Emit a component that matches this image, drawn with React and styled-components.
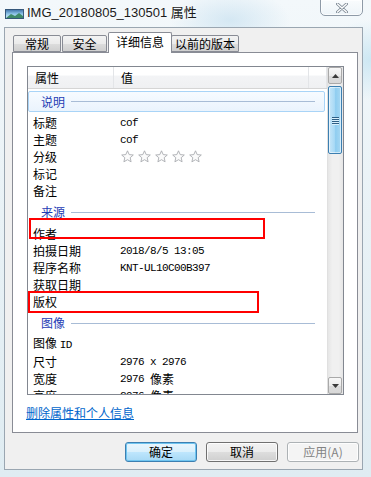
import React from 'react';
import styled, { createGlobalStyle } from 'styled-components';

const Global = createGlobalStyle`
  html, body { margin: 0; padding: 0; }
  body {
    width: 371px; height: 477px; overflow: hidden;
    font-family: "Noto Sans CJK SC", "Liberation Sans", sans-serif;
    font-size: 12px; color: #000;
  }
`;

const Window = styled.div`
  width: 371px; height: 477px; box-sizing: border-box;
  display: flex; flex-direction: column;
  padding: 0 8px 7px 4px;
  background:
    radial-gradient(ellipse 60px 30px at 230px 20px, rgba(200,225,240,0.7), transparent),
    radial-gradient(ellipse 50px 40px at 371px 60px, rgba(190,225,240,0.7), transparent),
    linear-gradient(180deg, #f3f8fb 0%, #e9f2f6 45%, #dfecf2 100%);
`;

const TitleBar = styled.div`
  height: 27px; flex: none;
  display: flex; align-items: flex-start;
`;

const AppIcon = styled.svg`
  margin: 9px 0 0 1px; flex: none;
`;

const Title = styled.div`
  margin: 4px 0 0 3px;
  font-family: "Liberation Sans", "Noto Sans CJK SC", sans-serif;
  font-size: 13px; line-height: 17px; color: #1a1a1a;
  text-shadow: 0 0 6px rgba(255,255,255,0.9);
`;

const CloseButton = styled.div`
  margin: -1px 0 0 auto;
  width: 43px; height: 17px; box-sizing: border-box;
  border: 1px solid #8e9aa7; border-radius: 0 0 5px 5px;
  background: linear-gradient(180deg, rgba(255,255,255,0.5), rgba(235,242,247,0.6));
  box-shadow: inset 0 0 0 1px rgba(255,255,255,0.7);
  display: flex; align-items: center; justify-content: center;
`;

const Client = styled.div`
  flex: 1; box-sizing: border-box;
  border: 1px solid #9aa6b1;
  background: #f0f0f0;
  padding: 5px 4px 0 7px;
  display: flex; flex-direction: column;
`;

const TabStrip = styled.div`
  height: 20px; display: flex; align-items: flex-end;
  margin-bottom: -1px; position: relative; z-index: 1;
  padding-left: 1px;
`;

const Tab = styled.div`
  box-sizing: border-box;
  height: ${p => (p.$active ? '21px' : '17px')};
  width: ${p => p.$w}px;
  margin: 0 ${p => (p.$active ? '-2px' : '0')};
  margin-bottom: ${p => (p.$active ? '0' : '1px')};
  border: 1px solid #898c95;
  border-bottom: ${p => (p.$active ? 'none' : '1px solid #898c95')};
  border-radius: 2px 2px 0 0;
  background: ${p => (p.$active ? '#fff' : 'linear-gradient(180deg, #f3f3f3 0%, #ebebeb 50%, #dddddd 51%, #cfcfcf 100%)')};
  position: relative; z-index: ${p => (p.$active ? 2 : 1)};
  display: flex; justify-content: center; align-items: center;
  padding-bottom: ${p => (p.$active ? '3px' : '0')};
  font-size: 12px; line-height: 14px; white-space: nowrap;
  & + & { margin-left: ${p => (p.$active ? '-2px' : '1px')}; }
`;

const TabPage = styled.div`
  box-sizing: border-box;
  height: 381px;
  border: 1px solid #898c95;
  background: #fff;
  padding: 13px 13px 0 14px;
  display: flex; flex-direction: column;
`;

const ListView = styled.div`
  box-sizing: border-box;
  height: 329px; flex: none;
  border: 1px solid #828790;
  display: flex;
  background: #fff;
`;

const ListBody = styled.div`
  flex: 1; min-width: 0; display: flex; flex-direction: column;
  overflow: hidden;
`;

const Header = styled.div`
  height: 22px; flex: none; box-sizing: border-box;
  display: flex;
  border-bottom: 1px solid #d5d5d5;
  background: linear-gradient(180deg, #ffffff 0%, #ffffff 40%, #f3f4f6 41%, #eff0f2 100%);
`;

const HeaderCell = styled.div`
  box-sizing: border-box;
  width: ${p => p.$w ? `${p.$w}px` : 'auto'};
  flex: ${p => p.$w ? 'none' : '1'};
  padding-left: 7px;
  border-right: 1px solid #e3e5e8;
  display: flex; align-items: center;
  font-size: 12px; line-height: 14px;
`;

const Rows = styled.div`
  flex: 1; position: relative;
`;

const GroupRow = styled.div`
  height: 25px; box-sizing: border-box;
  padding: 2px 2px 2px 0;
`;

const GroupBox = styled.div`
  height: 21px; box-sizing: border-box;
  display: flex; align-items: center; gap: 6px;
  padding: 0 9px 0 12px;
  border: 1px solid ${p => (p.$selected ? '#a9d4f7' : 'transparent')};
  border-radius: 2px;
  background: ${p => (p.$selected ? 'linear-gradient(180deg, #f7fbff 0%, #eaf3fd 100%)' : 'transparent')};
`;

const GroupLabel = styled.span`
  color: #1e3cb4; font-size: 12px; line-height: 14px;
  white-space: nowrap;
`;

const GroupLine = styled.div`
  flex: 1; height: 1px; background: #a8bcd6;
`;

const Row = styled.div`
  height: 17.2px; display: flex; align-items: center;
  position: relative;
`;

const NameCell = styled.div`
  width: 92px; flex: none; box-sizing: border-box; padding-left: 5px;
  font-size: 12px; line-height: 14px; white-space: nowrap;
`;

const ValueCell = styled.div`
  flex: 1; display: flex; align-items: center;
  font-size: 12px; line-height: 14px; white-space: nowrap;
`;

const Mono = styled.span`
  font-family: "Liberation Mono", monospace;
  font-size: 11px; letter-spacing: -0.6px;
  margin-right: ${p => p.$mr || 0}px;
`;

const Stars = styled.div`
  display: flex; gap: 4px; margin-left: 1px;
`;

const Mark = styled.div`
  position: absolute; box-sizing: border-box;
  left: ${p => p.$l}px; top: ${p => p.$t}px;
  width: ${p => p.$w}px; height: ${p => p.$h}px;
  border: 2px solid #ff0000;
  pointer-events: none;
`;

const ScrollBar = styled.div`
  width: 16px; flex: none; box-sizing: border-box;
  display: flex; flex-direction: column;
  background: linear-gradient(90deg, #e6e6e6 0%, #f0f0f0 30%, #f0f0f0 70%, #e6e6e6 100%);
  border-left: 1px solid #e0e0e0;
`;

const ArrowBtn = styled.div`
  height: 17px; flex: none; box-sizing: border-box;
  margin: 0 1px 0 0;
  border: 1px solid #a9a9a9; border-radius: 2px;
  background: linear-gradient(180deg, #f7f7f7 0%, #ececec 50%, #dcdcdc 51%, #d8d8d8 100%);
  display: flex; align-items: center; justify-content: center;
`;

const Track = styled.div`
  flex: 1; display: flex; flex-direction: column;
  padding: 2px 1px 2px 0;
`;

const Thumb = styled.div`
  height: 68px; box-sizing: border-box;
  border: 1px solid #3c7fb1; border-radius: 2px;
  background: linear-gradient(90deg, #c7e6f8 0%, #a9daf6 45%, #8fcdf0 55%, #a7d8f3 100%);
  box-shadow: inset 0 0 0 1px rgba(255,255,255,0.55);
  display: flex; align-items: center; justify-content: center;
`;

const Grip = styled.div`
  width: 7px; display: flex; flex-direction: column; gap: 1px;
  & > i { display: block; height: 1px; background: #2d5f86; box-shadow: 0 1px 0 #d9f0fc; }
`;

const LinkRow = styled.div`
  padding-top: 9px;
  margin-left: -1px;
`;

const Link = styled.a`
  color: #0066cc; text-decoration: underline;
  font-size: 12px; line-height: 16px;
  cursor: pointer;
`;

const ButtonBar = styled.div`
  display: flex; justify-content: flex-end; gap: 9px;
  padding: 9px 0 0 0;
  margin-right: -1px;
`;

const Button = styled.div`
  width: 72px; height: 20px; box-sizing: border-box;
  border: 1px solid ${p => (p.$default ? '#3c7fb1' : p.$disabled ? '#adb2b5' : '#707070')};
  border-radius: 3px;
  background: ${p =>
    p.$disabled ? '#f4f4f4'
    : p.$default ? 'linear-gradient(180deg, #eaf6fd 0%, #d9f0fc 50%, #bee6fd 51%, #a7d9f5 100%)'
    : 'linear-gradient(180deg, #f2f2f2 0%, #ebebeb 50%, #dddddd 51%, #cfcfcf 100%)'};
  box-shadow: ${p => (p.$default ? 'inset 0 0 0 1px #6fc5f0' : 'inset 0 0 0 1px rgba(255,255,255,0.8)')};
  color: ${p => (p.$disabled ? '#838383' : '#000')};
  display: flex; align-items: center; justify-content: center;
  font-size: 12px; line-height: 14px;
`;

const Star = () => (
  <svg width="13" height="13" viewBox="0 0 13 13">
    <path d="M6.5 0.8 L8.2 4.6 L12.3 5 L9.2 7.7 L10.1 11.8 L6.5 9.7 L2.9 11.8 L3.8 7.7 L0.7 5 L4.8 4.6 Z"
      fill="#fbfbfb" stroke="#a9acb0" strokeWidth="0.9" strokeLinejoin="round" />
  </svg>
);

const Arrow = ({ down }) => (
  <svg width="7" height="4" viewBox="0 0 7 4">
    {down ? <path d="M0 0 H7 L3.5 4 Z" fill="#3a3a3a" /> : <path d="M0 4 H7 L3.5 0 Z" fill="#3a3a3a" />}
  </svg>
);

const Group = ({ label, selected }) => (
  <GroupRow>
    <GroupBox $selected={selected}>
      <GroupLabel>{label}</GroupLabel>
      <GroupLine />
    </GroupBox>
  </GroupRow>
);

const Item = ({ name, children, mark }) => (
  <Row>
    <NameCell>{name}</NameCell>
    <ValueCell>{children}</ValueCell>
    {mark && <Mark $l={mark[0]} $t={mark[1]} $w={mark[2]} $h={mark[3]} />}
  </Row>
);

export default function App() {
  return (
    <>
      <Global />
      <Window>
        <TitleBar>
          <AppIcon width="19" height="10" viewBox="0 0 19 10">
            <defs>
              <linearGradient id="sky" x1="0" y1="0" x2="0" y2="1">
                <stop offset="0" stopColor="#3c6fa8" />
                <stop offset="0.5" stopColor="#8fc6ea" />
                <stop offset="1" stopColor="#d8f0f7" />
              </linearGradient>
            </defs>
            <rect x="0.5" y="0.5" width="18" height="9" fill="url(#sky)" stroke="#35577a" />
            <path d="M1 9 L6 5 L10 7 L14 4 L18 7 L18 9 Z" fill="#3f8a6a" />
          </AppIcon>
          <Title>IMG_20180805_130501 属性</Title>
          <CloseButton>
            <svg width="12" height="10" viewBox="0 0 12 10">
              <path d="M1.5 1 L10.5 9 M10.5 1 L1.5 9" stroke="#7c8894" strokeWidth="3" strokeLinecap="round" />
              <path d="M1.5 1 L10.5 9 M10.5 1 L1.5 9" stroke="#ffffff" strokeWidth="1.4" strokeLinecap="round" />
            </svg>
          </CloseButton>
        </TitleBar>
        <Client>
          <TabStrip>
            <Tab $w={48}>常规</Tab>
            <Tab $w={45}>安全</Tab>
            <Tab $w={64} $active>详细信息</Tab>
            <Tab $w={68}>以前的版本</Tab>
          </TabStrip>
          <TabPage>
            <ListView>
              <ListBody>
                <Header>
                  <HeaderCell $w={86}>属性</HeaderCell>
                  <HeaderCell $w={195}>值</HeaderCell>
                  <HeaderCell />
                </Header>
                <Rows>
                  <Group label="说明" selected />
                  <Item name="标题"><Mono>cof</Mono></Item>
                  <Item name="主题"><Mono>cof</Mono></Item>
                  <Item name="分级">
                    <Stars><Star /><Star /><Star /><Star /><Star /></Stars>
                  </Item>
                  <Item name="标记" />
                  <Item name="备注" />
                  <Group label="来源" />
                  <Item name="作者" mark={[1, -7, 236, 21]} />
                  <Item name="拍摄日期"><Mono>2018/8/5 13:05</Mono></Item>
                  <Item name="程序名称"><Mono>KNT-UL10C00B397</Mono></Item>
                  <Item name="获取日期" />
                  <Item name="版权" mark={[0, -3, 231, 22]} />
                  <Group label="图像" />
                  <Item name={<>图像 <Mono>ID</Mono></>} />
                  <Item name="尺寸"><Mono>2976 x 2976</Mono></Item>
                  <Item name="宽度"><Mono $mr={6}>2976</Mono>像素</Item>
                  <Item name="高度"><Mono $mr={6}>2976</Mono>像素</Item>
                </Rows>
              </ListBody>
              <ScrollBar>
                <ArrowBtn><Arrow /></ArrowBtn>
                <Track>
                  <Thumb>
                    <Grip><i /><i /><i /><i /></Grip>
                  </Thumb>
                </Track>
                <ArrowBtn><Arrow down /></ArrowBtn>
              </ScrollBar>
            </ListView>
            <LinkRow>
              <Link>删除属性和个人信息</Link>
            </LinkRow>
          </TabPage>
          <ButtonBar>
            <Button $default>确定</Button>
            <Button>取消</Button>
            <Button $disabled>应用(A)</Button>
          </ButtonBar>
        </Client>
      </Window>
    </>
  );
}
